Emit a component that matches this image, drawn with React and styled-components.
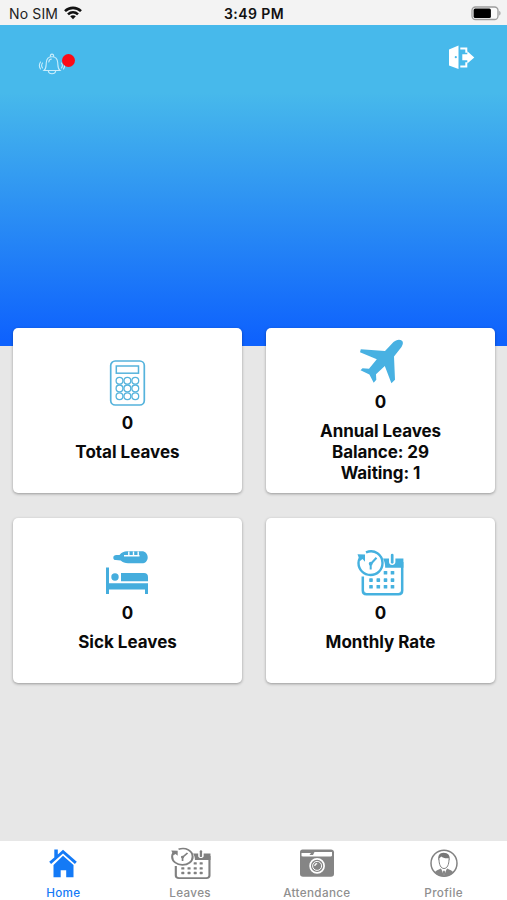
import React from 'react';
import styled, { createGlobalStyle } from 'styled-components';

const GlobalStyle = createGlobalStyle`
  * {
    box-sizing: border-box;
  }
  body {
    margin: 0;
    font-family: Inter, 'Liberation Sans', sans-serif;
    background: #e7e7e7;
  }
  svg {
    display: block;
  }
`;

const Screen = styled.div`
  display: flex;
  flex-direction: column;
  width: 507px;
  height: 900px;
  overflow: hidden;
  background: #e7e7e7;
`;

const StatusBar = styled.div`
  display: grid;
  grid-template-columns: 1fr auto 1fr;
  align-items: center;
  flex: none;
  height: 25px;
  padding: 2px 8px 1px 9px;
  background: #f3f3f3;
  color: #222;
  font-size: 14px;
`;

const Carrier = styled.div`
  display: flex;
  align-items: center;
  gap: 6px;
  letter-spacing: 0.15px;
`;

const Clock = styled.div`
  font-weight: 600;
  font-size: 14px;
  letter-spacing: 0.4px;
  color: #111;
`;

const Battery = styled.div`
  display: flex;
  justify-content: flex-end;
  margin-right: -3px;
`;

const Header = styled.header`
  display: flex;
  justify-content: space-between;
  align-items: flex-start;
  flex: none;
  height: 321px;
  padding: 19px 32px 0 38px;
  background: linear-gradient(#47b9eb 0%, #47b9eb 21%, #0e62fd 98%);
`;

const BellButton = styled.div`
  position: relative;
  margin-top: 8px;
`;

const Dot = styled.span`
  position: absolute;
  top: 2px;
  left: 24px;
  width: 13px;
  height: 13px;
  border-radius: 50%;
  background: #fb0b17;
`;

const Cards = styled.main`
  display: grid;
  grid-template-columns: 229px 229px;
  grid-auto-rows: 165px;
  gap: 25px 24px;
  flex: 1;
  margin-top: -18px;
  padding-left: 13px;
`;

const Card = styled.section`
  display: flex;
  flex-direction: column;
  align-items: center;
  justify-content: center;
  border-radius: 5px;
  background: #fff;
  box-shadow: 0 1px 3px rgba(0, 0, 0, 0.35);
  color: #0a0a0a;
  font-size: 17px;
  font-weight: 700;
  line-height: 21px;
  text-align: center;

  svg {
    margin-right: 1px;
  }
`;

const Count = styled.div`
  margin: 6px 0 8px;
`;

const Label = styled.div`
  letter-spacing: ${(p) => (p.$long ? '-0.08px' : '0')};
  white-space: pre-line;
`;

const TabBar = styled.nav`
  display: grid;
  grid-template-columns: repeat(4, 1fr);
  flex: none;
  height: 59px;
  background: #fff;
`;

const Tab = styled.div`
  display: flex;
  flex-direction: column;
  align-items: center;
  padding-top: 6px;
  color: ${(p) => (p.$active ? '#147af6' : '#8f8f8f')};
  font-size: 11.7px;
  font-weight: 500;
  line-height: 16px;
  letter-spacing: 0.35px;

  svg {
    margin-bottom: 5px;
  }
`;

const WifiIcon = () => (
  <svg width="18" height="14" viewBox="0 0 18 14" fill="none" stroke="#111" strokeWidth="2.6">
    <path d="M1 5.1C5.5.8 12.5.8 17 5.1" />
    <path d="M4 8.4c2.9-2.7 7.1-2.7 10 0" />
    <path d="M6.2 10.3C7.8 8.9 10.2 8.9 11.8 10.3L9 13.3z" fill="#111" stroke="none" />
  </svg>
);

const BatteryIcon = () => (
  <svg width="31" height="15" viewBox="0 0 31 15">
    <rect x="1" y="1" width="26" height="12.5" rx="3.5" fill="#fafafa" stroke="#9d9d9d" strokeWidth="1.3" />
    <rect x="2.6" y="2.6" width="17.3" height="9.4" rx="1.5" fill="#000" />
    <path d="M28.3 5v4.6c1.600-.4 1.600-4.200 0-4.600" fill="#999" />
  </svg>
);

const BellIcon = () => (
  <svg width="28" height="24" viewBox="0 0 28 24" fill="none" stroke="#c9edfc" strokeWidth="1.1" strokeLinecap="round">
    <path d="M6 18.5c2.4-2 2-4.5 2.3-8 .3-3.8 2.2-5.8 5.7-5.8s5.400 2 5.700 5.800c.3 3.500-.1 6 2.300 8z" />
    <path d="M12.300 4.500c0-3.200 3.400-3.200 3.400 0M10.300 19c.6 3.700 6.800 3.700 7.400 0M10.800 10c.2-1.900 1.100-2.800 2.600-3" />
    <path d="M4.500 11c-1.200 1.700-1.200 3.300 0 5M2.500 10c-1.500 2.300-1.500 4.700 0 7M23.500 11c1.200 1.700 1.200 3.300 0 5M25.500 10c1.500 2.300 1.500 4.700 0 7" />
  </svg>
);

const ExitIcon = () => (
  <svg width="27" height="26" viewBox="0 0 27 26">
    <path d="M1 5.500 10.500 1.500v23.500L1 21.500z" fill="#fff" />
    <circle cx="7.800" cy="13.200" r="1.100" fill="#47b9eb" />
    <path d="M12.300 4.600h6v4.200M12.300 22.400h6v-4.200" fill="none" stroke="#fff" strokeWidth="2" />
    <path d="M14.300 10.300h5V7.200l7 6.200-7 6v-3.200h-5z" fill="#fff" />
  </svg>
);

const CalculatorIcon = () => (
  <svg width="48" height="48" viewBox="0 0 48 48" fill="none" stroke="#55b3dc">
    <rect x="7.700" y="2" width="33.600" height="44" rx="4.500" strokeWidth="1.700" />
    <rect x="13.300" y="7" width="22.200" height="7.200" strokeWidth="1.500" />
    {[21.8, 29.4, 37.2].map((y) =>
      [16.5, 24.4, 32.3].map((x) => (
        <circle key={`${x}-${y}`} cx={x} cy={y} r="3.400" strokeWidth="1.300" />
      ))
    )}
  </svg>
);

const PlaneIcon = () => (
  <svg width="48" height="48" viewBox="0 0 48 48" fill="#48b1e2">
    <path d="M46 2.800c2 2 .3 5.500-1.700 7.800L38 18.500l1 23.300-3.600 3.400L28.800 28 20 36.300l.3 5.500-2.600 3-4.300-8.300L4.500 32.300l2-2 6.500.5 7.800-9.500L4 14.300l.8-3L29 13l8.500-9C39.800 1.800 43.700.6 46 2.800z" />
  </svg>
);

const SickIcon = () => (
  <svg width="48" height="48" viewBox="0 0 48 48" fill="#45addd">
    <path d="M10.300 8.700c0-1.700 1.200-2.500 3-2.600l3.200-.2C18.500 3.600 21 2.300 24 2.300h15c3.200 0 5.700 2.700 5.700 6.100s-2.500 5.900-5.700 5.900H25c-3 0-5.300-1-7.300-2.700l-4.800-.5c-1.700-.2-2.600-1-2.600-2.400z" />
    <path d="M25.800 6.500V2.500M30.500 6.500V2.500M35.200 6.500V2.500M21 6.800h15.500" fill="none" stroke="#fff" strokeWidth="1.400" />
    <path d="M3 18.500h3v15.700h39V45h-3v-4.500H6V45H3z" />
    <circle cx="12" cy="28" r="3.700" />
    <path d="M18 24h23c2.500 0 4 1.500 4 4v4.300H18z" />
  </svg>
);

// shared by the monthly rate card and the leaves tab
const CalendarClockIcon = ({ width = 48, height = 48, color = '#45b1df' }) => (
  <svg width={width} height={height} viewBox="0 0 48 48" preserveAspectRatio="none" fill="none" stroke={color}>
    <path d="M6.800 27.500v14c0 2.500 1.300 3.700 3.700 3.700h32c2.500 0 3.700-1.200 3.700-3.700V13" strokeWidth="2.500" />
    <path d="M27 9.500h6V13c0 4 6.400 4 6.400 0V9.500h8v9.300H29.200c0-3.800-.8-6.600-2.200-9.300z" fill={color} stroke="none" />
    <path d="M36.200 6v7.300" strokeWidth="2.700" strokeLinecap="round" />
    <path d="M10 3.300C18.500-.2 26.500 5.500 26.500 14c0 7-5.300 12-12 12s-12-5.300-12-12c0-2 .4-3.400 1.300-5" strokeWidth="2.400" />
    <path d="m1.500 5.200 7.500.3v7.300L6.500 10 4 12z" fill={color} stroke="none" />
    <path d="M14.700 15 20.500 8.800M14.700 14.500v6" strokeWidth="2" />
    <circle cx="14.700" cy="14.700" r="1.900" fill={color} stroke="none" />
    <g fill={color} stroke="none">
      {[
        [29.5, 23], [36.5, 23],
        [15, 30.3], [22.3, 30.3], [29.5, 30.3], [36.5, 30.3],
        [15, 37], [22.3, 37], [29.5, 37], [36.5, 37],
      ].map(([x, y]) => (
        <rect key={`${x}-${y}`} x={x - 1.8} y={y - 1} width="3.600" height="3.600" rx=".6" />
      ))}
    </g>
  </svg>
);

const HomeIcon = () => (
  <svg width="30" height="33" viewBox="0 0 30 33" fill="#147af6">
    <path d="M6.300 2.500h3.500v5L15 2.800 28.800 14.800 26.900 17 15 6.600 3.100 17 1.200 14.800 6.300 10.500z" />
    <path d="m15 8.700 10.500 9.200v12.300h-7.300v-7h-5.500v7H5.500V17.900z" />
  </svg>
);

const CameraIcon = () => (
  <svg width="36" height="33" viewBox="0 0 36 33">
    <path d="M1 5C1 3.500 2 2.500 3.500 2.500H32c1.700 0 3 1 3 2.700v21.800c0 1.700-1.200 2.700-3 2.700H4c-1.800 0-3-1-3-2.700z" fill="#858585" />
    <path d="M2.500 8.500V5.900h9.500l-1.500 2h3.500L15.500 5H33v3.200c0 .8-.4 1.200-1.200 1.200H3.700c-.8 0-1.200-.4-1.200-.9z" fill="#fff" />
    <circle cx="18.100" cy="18.900" r="7" fill="none" stroke="#fff" strokeWidth="1.700" />
    <circle cx="18.100" cy="18.900" r="4.500" fill="none" stroke="#fff" strokeWidth="1" />
    <path d="M15.800 19c.1-1.400 1-2.300 2.400-2.400" fill="none" stroke="#fff" strokeWidth="1.200" />
  </svg>
);

const ProfileIcon = () => (
  <svg width="30" height="33" viewBox="0 0 30 33" fill="none" stroke="#828282">
    <circle cx="15" cy="16.200" r="13" strokeWidth="1.500" />
    <path d="M5.800 25.500c.7-2.200 3.500-2.700 6-4.100l3.200 2.500 3.200-2.500c2.500 1.400 5.300 1.900 6 4.100-5 5-13.500 5-18.400 0z" fill="#858585" stroke="none" />
    <path d="m12 21 3 8 3-8" fill="#fff" stroke="none" />
    <path d="m15 23.200 1.200 1.500-.6 4.300h-1.200l-.6-4.300z" fill="#858585" stroke="none" />
    <path d="M10 12.200c0 5.500 1.800 9.300 5 9.300s5-3.800 5-9.300" fill="#fff" strokeWidth="1" />
    <path d="M9.500 13.500c-1-5 1-7.800 5-7.800 4.700 0 7 2.800 6 7.800l-1-2.300c-3.300.3-5.500-.3-7.300-1.700l-1.700 1.700z" fill="#777" stroke="none" />
  </svg>
);

const cards = [
  { icon: <CalculatorIcon />, label: 'Total Leaves' },
  { icon: <PlaneIcon />, label: 'Annual Leaves\nBalance: 29\nWaiting: 1', long: true },
  { icon: <SickIcon />, label: 'Sick Leaves' },
  { icon: <CalendarClockIcon />, label: 'Monthly Rate' },
];

const tabs = [
  { icon: <HomeIcon />, label: 'Home', active: true },
  { icon: <CalendarClockIcon width={41} height={33} color="#808080" />, label: 'Leaves' },
  { icon: <CameraIcon />, label: 'Attendance' },
  { icon: <ProfileIcon />, label: 'Profile' },
];

const App = () => {
  return (
    <Screen>
      <GlobalStyle />
      <StatusBar>
        <Carrier>
          No SIM <WifiIcon />
        </Carrier>
        <Clock>3:49 PM</Clock>
        <Battery>
          <BatteryIcon />
        </Battery>
      </StatusBar>
      <Header>
        <BellButton>
          <BellIcon />
          <Dot />
        </BellButton>
        <ExitIcon />
      </Header>
      <Cards>
        {cards.map((card) => (
          <Card key={card.label}>
            {card.icon}
            <Count>0</Count>
            <Label $long={card.long}>{card.label}</Label>
          </Card>
        ))}
      </Cards>
      <TabBar>
        {tabs.map((tab) => (
          <Tab key={tab.label} $active={tab.active}>
            {tab.icon}
            {tab.label}
          </Tab>
        ))}
      </TabBar>
    </Screen>
  );
};

export default App;
